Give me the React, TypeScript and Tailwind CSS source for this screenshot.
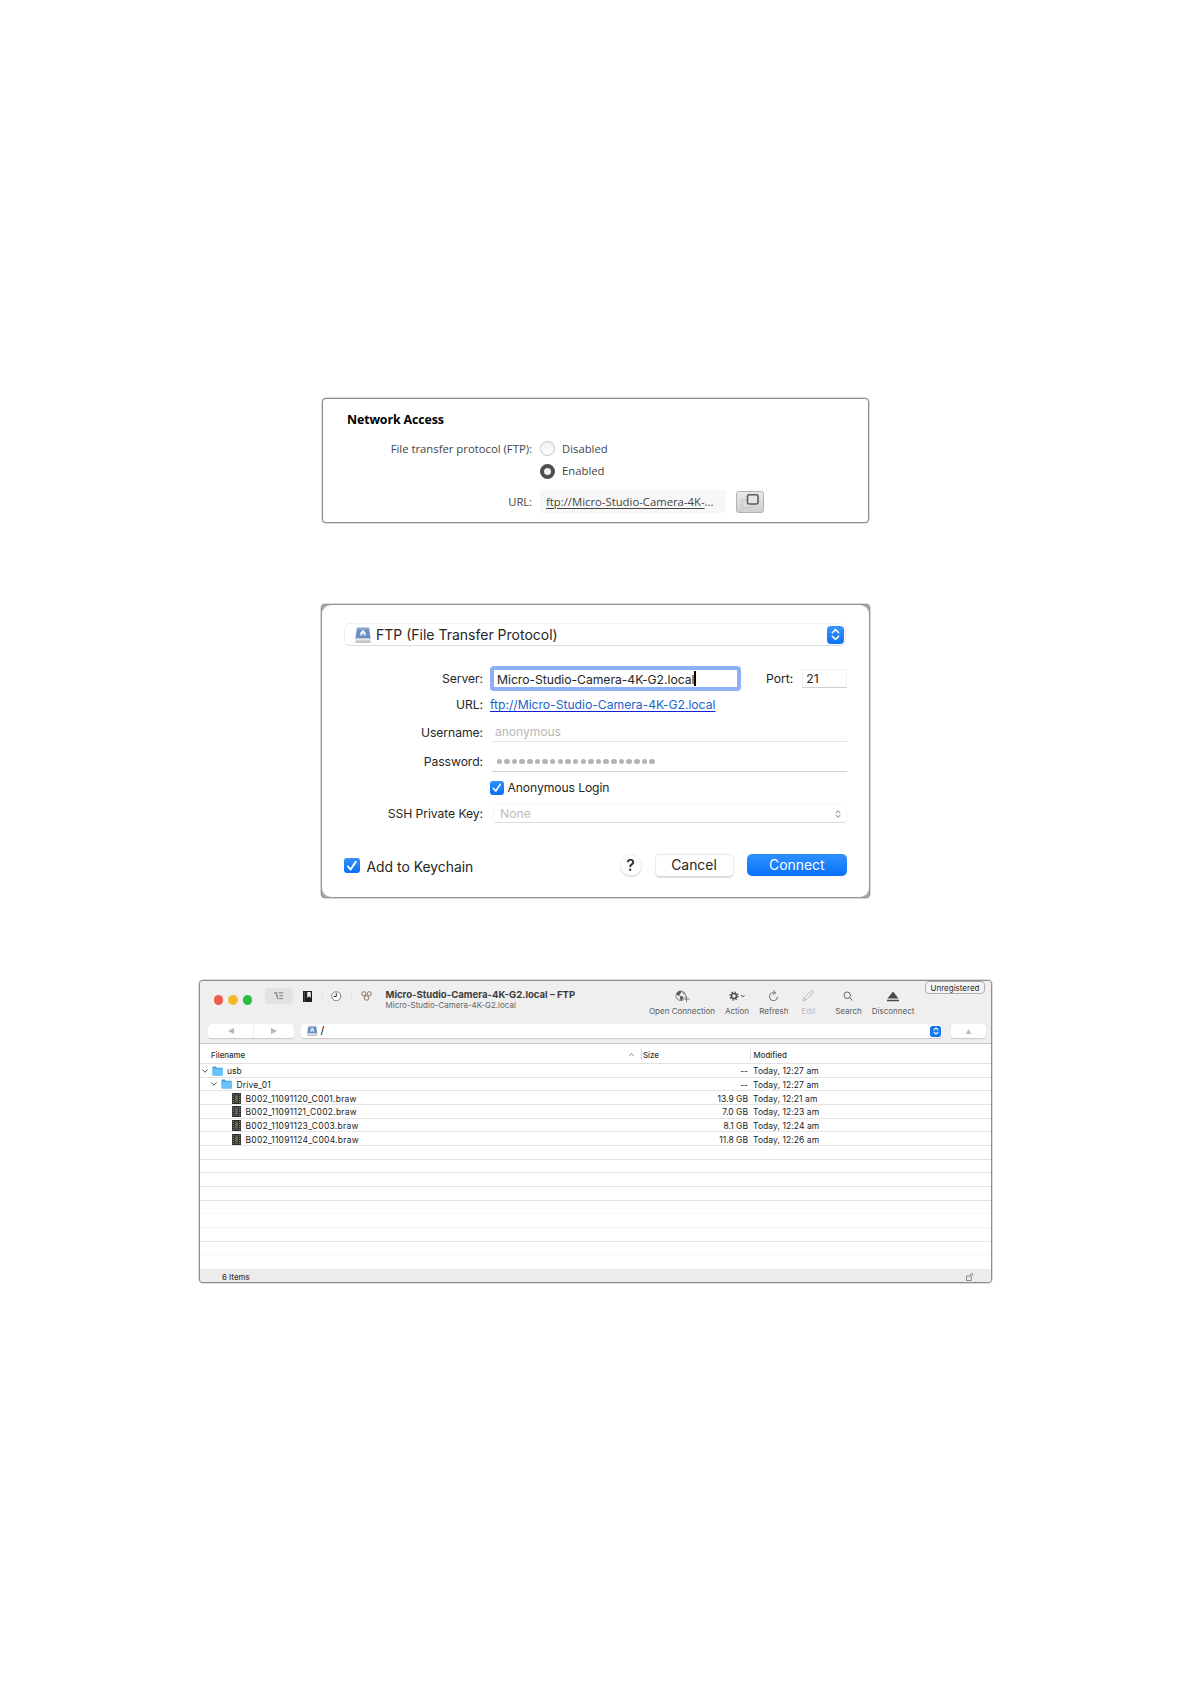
import clsx from "clsx";
import type { ReactNode } from "react";

const files = [
  { name: "usb", depth: 0, size: "--", modified: "Today, 12:27 am" },
  { name: "Drive_01", depth: 1, size: "--", modified: "Today, 12:27 am" },
  { name: "B002_11091120_C001.braw", depth: 2, size: "13.9 GB", modified: "Today, 12:21 am" },
  { name: "B002_11091121_C002.braw", depth: 2, size: "7.0 GB", modified: "Today, 12:23 am" },
  { name: "B002_11091123_C003.braw", depth: 2, size: "8.1 GB", modified: "Today, 12:24 am" },
  { name: "B002_11091124_C004.braw", depth: 2, size: "11.8 GB", modified: "Today, 12:26 am" },
];

// borders of the empty rows under the listing
const emptyRows = [
  "border-[#e2e2e2]",
  "border-[#e2e2e2]",
  "border-[#e2e2e2]",
  "border-[#e2e2e2]",
  "border-[#f7f7f7]",
  "border-[#f3f3f3]",
  "border-[#e8e8e8]",
  "border-[#f5f5f5]",
];

const DriveIcon = ({ className }: { className: string }) => (
  <svg viewBox="0 0 16 16" className={className}>
    <path d="M2 .8h12L15.700 12H.3z" fill="#6a90c2" />
    <path d="M2 .8h12l.3 2H1.700z" fill="#86a6cf" />
    <path d="M8 2.800l2.600 2.800v3H8.900V6.800H7.100v1.800H5.400v-3z" fill="#f4f8fd" />
    <path d="M.3 11.500h15.400v3.200a.8.8 0 0 1-.8.8H1.100a.8.8 0 0 1-.8-.8z" fill="#d0d3d8" />
    <path d="M.3 11.500h15.400v1.200H.3z" fill="#eef0f3" />
    <path d="M.6 15.200h14.800" stroke="#8d9299" strokeWidth=".6" />
  </svg>
);

const UpDown = ({ className }: { className: string }) => (
  <svg
    viewBox="0 0 10 14"
    className={className}
    fill="none"
    stroke="currentColor"
    strokeWidth="1.800"
    strokeLinecap="round"
    strokeLinejoin="round"
  >
    <path d="M1.500 5L5 1.500 8.500 5M1.500 9L5 12.500 8.500 9" />
  </svg>
);

const Check = ({ className }: { className: string }) => (
  <span
    className={clsx(
      "flex shrink-0 items-center justify-center rounded-[3px] bg-linear-to-b from-[#3090fb] to-[#0a6ff8]",
      className
    )}
  >
    <svg viewBox="0 0 14 14" className="size-full" fill="none" stroke="#fff" strokeWidth="1.700" strokeLinecap="round" strokeLinejoin="round">
      <path d="M3.500 7.600L6 10.400 10.600 3.500" />
    </svg>
  </span>
);

const Folder = () => (
  <svg viewBox="0 0 22 20" className="h-[10px] w-[11px] shrink-0">
    <path d="M1 2.500A1.500 1.500 0 0 1 2.500 1h5l2 2.500H20A1.500 1.500 0 0 1 21.500 5v12.500A1.500 1.500 0 0 1 20 19H2.500A1.500 1.500 0 0 1 1 17.500z" fill="#3fa4dd" />
    <path d="M1 5.500h20.500v12A1.500 1.500 0 0 1 20 19H2.500A1.500 1.500 0 0 1 1 17.500z" fill="#68c4f7" />
  </svg>
);

const Clip = () => (
  <svg viewBox="0 0 18 22" className="h-[11px] w-[9px] shrink-0">
    <path d="M0 0h18v22H0z" fill="#2b2b29" />
    <path d="M5.500 2h7v18h-7z" fill="#50524a" />
    <path d="M7 6h4v9H7z" fill="#6d6c5e" />
    <path d="M2.500 1.500v20M15.500 1.500v20" stroke="#b5b5b0" strokeWidth="1.800" strokeDasharray="2 2.200" />
  </svg>
);

const Chevron = () => (
  <svg viewBox="0 0 12 8" className="h-[4px] w-[6px] shrink-0" fill="none" stroke="#4a4a4a" strokeWidth="1.900">
    <path d="M1 1l5 5.500L11 1" />
  </svg>
);

const Radio = ({ checked }: { checked?: boolean }) => (
  <span
    className={clsx(
      "size-[15px] shrink-0 rounded-full",
      checked
        ? "border-[4.500px] border-[#4e4e4e] bg-[#f2f2f2]"
        : "border border-[#c4c4c4] bg-linear-to-b from-[#f0f0f0] to-white"
    )}
  />
);

const NetworkAccess = () => (
  <section className="ml-[322px] h-[125px] w-[547px] rounded-[4px] border border-[#8e8e8e] bg-white pt-[10px] font-['Open_Sans',sans-serif] text-[11.300px] whitespace-nowrap text-[#454545] shadow-[0_0_0_0.500px_#b5b5b5]">
    <h2 className="h-[21px] pl-[24px] text-[12.400px] leading-[22px] font-bold tracking-[-0.130px] text-black">
      Network Access
    </h2>
    <div className="mt-[7px] flex h-[23px] items-center">
      <span className="w-[209px] pt-[2px] text-right">File transfer protocol (FTP):</span>
      <span className="ml-[7.500px] flex items-center">
        <Radio />
        <span className="ml-[7.500px] pt-[2px]">Disabled</span>
      </span>
    </div>
    <div className="flex h-[22px] items-center pl-[216.500px]">
      <Radio checked />
      <span className="ml-[7.500px] pt-px">Enabled</span>
    </div>
    <div className="mt-[8px] flex h-[23px] items-center">
      <span className="w-[209px] pt-[2px] text-right tracking-[-0.100px]">URL:</span>
      <span className="ml-[8px] flex h-[23px] w-[186px] items-center rounded-[3px] bg-[#f7f7f7] pt-[2px] pl-[6px]">
        <span className="underline decoration-1 underline-offset-[1.500px]">ftp://Micro-Studio-Camera-4K-</span>
        <span>...</span>
      </span>
      <span className="ml-[10px] flex h-[22px] w-[28px] items-start justify-center rounded-[3px] border border-[#b3b3b3] bg-linear-to-b from-[#e9e9e9] to-[#cfcfcf]">
        <svg viewBox="0 0 20 16" className="mt-px h-[16px] w-[20px]" fill="none">
          <rect x="2" y="6.500" width="10" height="8" rx="1" fill="#dcdcdc" stroke="#c4c4c4" />
          <rect x="7.500" y="1.800" width="10.500" height="9.200" rx="1.500" fill="#e4e4e4" stroke="#5c5c5c" strokeWidth="1.600" />
        </svg>
      </span>
    </div>
  </section>
);

const Label = ({ children }: { children: ReactNode }) => (
  <span className="mr-[7px] w-[161px] shrink-0 pt-[2px] text-right tracking-[-0.080px]">{children}</span>
);

const FtpDialog = () => (
  <section className="mt-[81px] ml-[321px] h-[294px] w-[549px] rounded-[4px] border border-[#949494] bg-[#a9a9a9] font-['Inter',sans-serif] text-[12.200px] whitespace-nowrap text-[#262626] shadow-[0_0_0_0.500px_#b5b5b5]">
    <div className="h-full rounded-[9px] bg-white pt-[18px]">
      <div className="ml-[22px] flex h-[23px] w-[502px] items-center rounded-[6px] border border-[#f0f0f0] border-b-[#dcdcdc] pr-px pl-[10px] text-[14px]">
        <DriveIcon className="size-[16px]" />
        <span className="ml-[5px] flex-1">FTP (File Transfer Protocol)</span>
        <span className="flex h-[18px] w-[17px] items-center justify-center rounded-[4px] bg-linear-to-b from-[#3a95fb] to-[#0b70f5] text-white">
          <UpDown className="h-[13px] w-[9px]" />
        </span>
      </div>

      <div className="mt-[20px] flex h-[25px] items-center">
        <Label>Server:</Label>
        <span className="flex h-[25px] w-[251px] items-center rounded-[4px] border-4 border-[#8eb0f4] bg-white pl-[3px]">
          <span className="pt-[3px] tracking-[-0.040px]">Micro-Studio-Camera-4K-G2.local</span>
          <span className="h-[15px] w-[1.500px] bg-black" />
        </span>
        <span className="ml-[25px] pt-[2px]">Port:</span>
        <span className="ml-[9px] flex h-[19px] w-[45px] items-center border border-[#f0f0f0] border-b-[#cfcfcf] pt-px pl-[3px]">
          21
        </span>
      </div>
      <div className="flex h-[27px] items-center">
        <Label>URL:</Label>
        <span className="pt-[2px] tracking-[-0.030px] text-[#1a63c9] underline decoration-[#1420d8] decoration-1 underline-offset-[1.500px]">
          ftp://Micro-Studio-Camera-4K-G2.local
        </span>
      </div>
      <div className="flex h-[28px] items-center">
        <Label>Username:</Label>
        <span className="ml-[2px] flex h-[20px] w-[355px] items-center border-b border-[#e4e4e4] pt-[2px] pl-[3px] tracking-[-0.100px] text-[#b9b9b9]">
          anonymous
        </span>
      </div>
      <div className="flex h-[31px] items-center">
        <Label>Password:</Label>
        <span className="ml-[2px] flex h-[20px] w-[355px] items-center gap-[2.150px] border-b border-[#d4d4d4] pt-px pl-[4.500px]">
          {Array.from({ length: 21 }, (_, i) => (
            <span key={i} className="size-[5.500px] rounded-full bg-[#b4b4b4]" />
          ))}
        </span>
      </div>
      <div className="flex h-[22px] items-center pl-[168px]">
        <Check className="size-[13.500px]" />
        <span className="ml-[4px] tracking-[-0.120px]">Anonymous Login</span>
      </div>
      <div className="flex h-[29px] items-center">
        <Label>SSH Private Key:</Label>
        <span className="ml-[3px] flex h-[19px] w-[354px] items-center justify-between rounded-[4px] border border-[#f6f6f6] border-b-[#dadada] pr-[5px] pl-[6px] text-[#bdbdbd]">
          <span className="pt-px">None</span>
          <UpDown className="h-[8px] w-[6px] text-[#a2a2a2]" />
        </span>
      </div>

      <div className="mt-[21px] flex h-[32px] items-center pl-[22px] text-[13.900px]">
        <Check className="mt-px size-[15.500px]" />
        <span className="ml-[7px] pt-[4px]">Add to Keychain</span>
        <span className="ml-auto flex size-[22px] items-center justify-center rounded-full border border-[#f0f0f0] text-[16px] font-medium shadow-[0_1px_1px_#cfcfcf]">
          ?
        </span>
        <span className="ml-[13px] flex h-[23px] w-[79px] items-center justify-center rounded-[5px] border border-[#ececec] border-b-[#d6d6d6] shadow-[0_0.500px_1px_#dedede]">
          Cancel
        </span>
        <span className="mr-[22.500px] ml-[13.500px] flex h-[22px] w-[99.500px] items-center justify-center rounded-[5px] bg-linear-to-b from-[#2f90ff] to-[#0271fa] text-white">
          Connect
        </span>
      </div>
    </div>
  </section>
);

const Tool = ({ label, className, children }: { label: string; className: string; children: ReactNode }) => (
  <div className={clsx("flex shrink-0 flex-col items-center", className)}>
    <div className="flex h-[18px] items-center">{children}</div>
    <span className="mt-[1px] text-[8px] leading-[10px]">{label}</span>
  </div>
);

const Toolbar = () => (
  <div className="relative flex h-[43px] text-[#5c5c5c]">
    <div className="ml-[13.500px] flex w-[51px] gap-[5px] pt-[14px]">
      <span className="size-[9.500px] rounded-full bg-[#f45b50]" />
      <span className="size-[9.500px] rounded-full bg-[#f6b82b]" />
      <span className="size-[9.500px] rounded-full bg-[#2bbf3b]" />
    </div>
    <div className="mt-[7px] flex h-[16px] w-[116px] items-center">
      <span className="flex h-[16px] w-[28px] items-center justify-center rounded-[3px] bg-[#e2e2e2]">
        <svg viewBox="0 0 20 18" className="h-[8px] w-[9px]" fill="none" stroke="#555" strokeWidth="1.700">
          <path d="M0 2h7M3.500 2l3 6.500H9M6 8.500l2 6.500h2M10 2h10M12 8.500h8M12 15h8" />
        </svg>
      </span>
      <span className="ml-px flex h-[8px] w-[29px] items-center justify-center border-r border-[#e6e6e6]">
        <svg viewBox="0 0 18 22" className="h-[11px] w-[9px] shrink-0">
          <path d="M0 0h18v22H0z" fill="#1f1f1f" />
          <path d="M8.500 2h7v12l-3.500-3.500L8.500 14z" fill="#f2f2f2" />
          <path d="M3 1v20" stroke="#777" />
        </svg>
      </span>
      <span className="flex h-[8px] w-[29px] items-center justify-center border-r border-[#e6e6e6]">
        <svg viewBox="0 0 22 22" className="size-[10.500px] shrink-0" fill="#fff" stroke="#555" strokeWidth="1.500">
          <circle cx="11" cy="11" r="9.500" />
          <path d="M11 4v7.500H5.500" strokeWidth="2" stroke="#222" fill="none" />
        </svg>
      </span>
      <span className="flex w-[29px] items-center justify-center">
        <svg viewBox="0 0 22 20" className="h-[10px] w-[11px]" fill="#f3e6dd" stroke="#7d7066" strokeWidth="1.800">
          <circle cx="5.500" cy="5.500" r="4.200" />
          <circle cx="16.500" cy="5.500" r="4.200" />
          <circle cx="11" cy="14" r="4.600" />
        </svg>
      </span>
    </div>
    <div className="mt-[8px] ml-[5px] w-[259.500px]">
      <p className="text-[9.550px] leading-[11px] font-bold text-[#3c3c3c]">Micro-Studio-Camera-4K-G2.local – FTP</p>
      <p className="text-[8px] leading-[11px] text-[#666]">Micro-Studio-Camera-4K-G2.local</p>
    </div>
    <div className="flex pt-[6px]">
      <Tool label="Open Connection" className="w-[74px]">
        <svg viewBox="0 0 30 26" className="h-[13px] w-[15px]" fill="none" stroke="#555" strokeWidth="1.500">
          <circle cx="11.500" cy="11.500" r="9.500" />
          <path d="M4 6.500c2-3 5-4 8-3.500l-1 3.500-3 1 1 3-3 .5zM11 12.500l5 1.500-1 4-3 2.500-1.500-4z" fill="#555" />
          <path d="M15 3.500l2 3.500 3 .5" />
          <path d="M23 12v12M17 18h12" stroke="#efefef" strokeWidth="4" />
          <path d="M23 12v12M17 18h12" />
        </svg>
      </Tool>
      <Tool label="Action" className="w-[36px]">
        <svg viewBox="0 0 32 20" className="h-[10px] w-[16px]" fill="none" stroke="#505050">
          <circle cx="10" cy="10" r="5" strokeWidth="3.200" />
          <circle cx="10" cy="10" r="8" strokeWidth="2.600" strokeDasharray="3.140 3.140" />
          <path d="M24 8l3.500 4L31 8" strokeWidth="2" />
        </svg>
      </Tool>
      <Tool label="Refresh" className="w-[37.600px]">
        <svg viewBox="0 0 22 24" className="h-[12px] w-[11px]" fill="none" stroke="#555" strokeWidth="1.700">
          <path d="M14 5.500H10.500a8 8 0 1 0 8.500 8" />
          <path d="M10.500 1l5 4.500-5 4.500" />
        </svg>
      </Tool>
      <Tool label="Edit" className="w-[31.800px] text-[#bdbdbd]">
        <svg viewBox="0 0 24 24" className="size-[12px]" fill="none" stroke="#a8a8a8" strokeWidth="1.500">
          <path d="M2 22l2-6.500L17.500 2a2.500 2.500 0 0 1 4 4L8 19.500zM15 4.500l4 4M4 15.500l4 4" />
        </svg>
      </Tool>
      <Tool label="Search" className="w-[48.200px]">
        <svg viewBox="0 0 20 20" className="size-[10px]" fill="none" stroke="#555" strokeWidth="1.800">
          <circle cx="8.500" cy="8.500" r="6.500" />
          <path d="M13.200 13.200L19 19" />
        </svg>
      </Tool>
      <Tool label="Disconnect" className="w-[41px]">
        <svg viewBox="0 0 24 22" className="h-[11px] w-[12px]" fill="#4a4a4a">
          <path d="M12 1l11 14H1zM0 17.500h24v3H0z" />
        </svg>
      </Tool>
    </div>
    <span className="absolute top-0 right-[6px] flex h-[13px] w-[60px] items-center justify-center rounded-[4px] border border-[#ababab] bg-[#f4f4f4] text-[8px] text-[#2c2c2c]">
      Unregistered
    </span>
  </div>
);

const Listing = () => (
  <div className="grid min-h-0 flex-1 grid-rows-[repeat(15,minmax(0,1fr))] text-[8.500px] leading-[10px] text-[#1c1c1c]">
    {files.map((file) => (
      <div key={file.name} className="flex min-h-0 items-center border-b border-[#e4e4e4] pt-px">
        <div
          className={clsx(
            "flex w-[440px] items-center",
            file.depth === 0 && "pl-[2px]",
            file.depth === 1 && "pl-[11px]",
            file.depth === 2 && "pl-[32px]"
          )}
        >
          {file.depth < 2 && <Chevron />}
          <span className={clsx("flex", file.depth < 2 && "ml-[4px]")}>{file.depth < 2 ? <Folder /> : <Clip />}</span>
          <span
            className={clsx(
              "pt-px",
              file.depth === 0 && "ml-[4px]",
              file.depth === 1 && "ml-[4.500px] tracking-[0.130px]",
              file.depth === 2 && "ml-[4.500px] tracking-[0.250px]"
            )}
          >
            {file.name}
          </span>
        </div>
        <span className="w-[108px] pt-px text-right">{file.size}</span>
        <span className="ml-[5px] pt-px tracking-[0.070px]">{file.modified}</span>
      </div>
    ))}
    {emptyRows.map((border, i) => (
      <div key={i} className={clsx("border-b", border)} />
    ))}
    <div />
  </div>
);

const Browser = () => (
  <section className="mt-[82px] ml-[199px] flex h-[303px] w-[793px] flex-col overflow-hidden rounded-[4px] border border-[#8e8e8e] bg-white font-['Inter',sans-serif] whitespace-nowrap shadow-[0_0_0_0.500px_#b5b5b5]">
    <header className="h-[63px] shrink-0 border-b border-[#c9c9c9] bg-[#efefef]">
      <Toolbar />
      <div className="flex h-[14px] pl-[8px]">
        <div className="flex w-[86px] rounded-[3px] bg-white text-[#b5b5b5] shadow-[0_0.500px_1px_#c8c8c8]">
          <span className="flex w-[46px] items-center justify-center border-r border-[#ececec]">
            <svg viewBox="0 0 10 10" className="size-[6px]" fill="currentColor">
              <path d="M0 5l10-5v10z" />
            </svg>
          </span>
          <span className="flex w-[40px] items-center justify-center">
            <svg viewBox="0 0 10 10" className="size-[6px]" fill="currentColor">
              <path d="M10 5L0 0v10z" />
            </svg>
          </span>
        </div>
        <div className="ml-[7px] flex w-[641px] items-center rounded-[3px] bg-white pr-px pl-[6px] shadow-[0_0.500px_1px_#c8c8c8]">
          <DriveIcon className="size-[10.500px]" />
          <span className="ml-[3px] flex-1 text-[10.500px] text-black">/</span>
          <span className="flex size-[11px] items-center justify-center rounded-[2.500px] bg-[#1677ea] text-white">
            <UpDown className="h-[8px] w-[6px]" />
          </span>
        </div>
        <div className="ml-[9px] flex w-[35px] items-center justify-center rounded-[3px] bg-white text-[#b5b5b5] shadow-[0_0.500px_1px_#c8c8c8]">
          <svg viewBox="0 0 10 10" className="size-[5px]" fill="currentColor">
            <path d="M5 0l5 10H0z" />
          </svg>
        </div>
      </div>
    </header>

    <div className="flex h-[20px] shrink-0 items-center border-b border-[#e2e2e2] pt-[2px] text-[7.900px] leading-[12px] font-medium text-[#333]">
      <span className="w-[429px] pl-[11px]">Filename</span>
      <svg viewBox="0 0 10 6" className="h-[3px] w-[5px]" fill="none" stroke="#777" strokeWidth="1.800">
        <path d="M1 5.500L5 1l4 4.500" />
      </svg>
      <span className="ml-[7px] flex h-[11px] w-[109px] items-center border-l border-[#d9d9d9] pl-px">Size</span>
      <span className="flex h-[11px] items-center border-l border-[#d9d9d9] pl-[2.500px]">Modified</span>
    </div>

    <Listing />

    <footer className="flex h-[13px] shrink-0 items-center justify-between bg-[#ececec] pt-[2px] pr-[17px] pl-[22px] text-[7.900px] leading-[10px] font-medium text-[#3c3c3c]">
      6 Items
      <svg viewBox="0 0 16 16" className="size-[8px]" fill="none" stroke="#777" strokeWidth="1.700">
        <path d="M1 6h9.500v9H1zM9 6V3.500a2.500 2.500 0 0 1 5 0V5" />
      </svg>
    </footer>
  </section>
);

export default function App() {
  return (
    <main className="h-[1684px] w-[1191px] overflow-hidden bg-white pt-[398px]">
      <NetworkAccess />
      <FtpDialog />
      <Browser />
    </main>
  );
}
